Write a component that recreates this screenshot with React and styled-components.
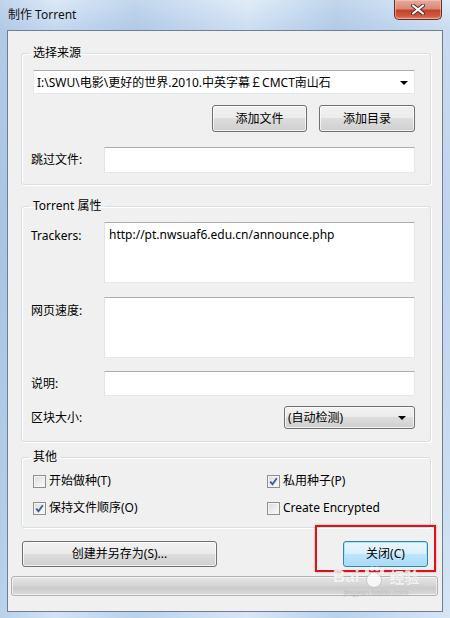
import React from "react";
import styled, { createGlobalStyle } from "styled-components";

const font = `"Noto Sans", "Noto Sans CJK SC", sans-serif`;

const GlobalStyle = createGlobalStyle`
  body {
    margin: 0;
    background: #ffffff;
  }
`;

const Window = styled.div`
  position: relative;
  width: 450px;
  height: 618px;
  display: flex;
  flex-direction: column;
  overflow: hidden;
  font-family: ${font};
  font-size: 12px;
  color: #000;
  background:
    linear-gradient(90deg, rgba(140, 175, 215, 0.35) 0%, rgba(255, 255, 255, 0) 12%, rgba(120, 160, 210, 0.25) 30%, rgba(255, 255, 255, 0.15) 55%, rgba(130, 170, 215, 0.3) 75%, rgba(255, 255, 255, 0.1) 100%),
    linear-gradient(180deg, #dce9f6 0%, #c2d7ee 5%, #b8d0ea 40%, #c5dbf0 80%, #d2e3f4 100%);
`;

const TitleBar = styled.div`
  height: 30px;
  display: flex;
  align-items: flex-start;
  padding-left: 8px;
  flex-shrink: 0;
`;

const Title = styled.div`
  line-height: 30px;
  font-size: 12px;
  color: #111;
`;

const CloseButton = styled.div`
  margin-left: auto;
  margin-right: 8px;
  width: 46px;
  height: 19px;
  border: 1px solid #6a2b24;
  border-top: none;
  border-radius: 0 0 5px 5px;
  background: linear-gradient(180deg, #e9a99b 0%, #d88a78 45%, #c2432c 55%, #cf5a40 85%, #e28a6e 100%);
  box-shadow: inset 0 0 0 1px rgba(255, 210, 200, 0.5);
  display: flex;
  align-items: center;
  justify-content: center;
`;

const Client = styled.div`
  flex: 1;
  margin: 0 7px 6px 7px;
  border: 1px solid #6f7f92;
  background: #f0f0f0;
  padding: 14px 11px 0 13px;
  display: flex;
  flex-direction: column;
`;

const Group = styled.fieldset`
  margin: ${(p) => p.$mt || 0}px 0 0 0;
  min-width: 0;
  width: 410px;
  box-sizing: border-box;
  border: 1px solid #d5dfe5;
  border-radius: 3px;
  box-shadow: inset 1px 1px 0 #ffffff, 1px 1px 0 #ffffff;
  padding: ${(p) => p.$pt}px 15px ${(p) => p.$pb}px 11px;
  display: flex;
  flex-direction: column;
`;

const Legend = styled.legend`
  padding: 0 4px;
  margin-left: -4px;
  line-height: 16px;
  height: 16px;
  font-size: 12px;
`;

const ComboEdit = styled.div`
  height: 24px;
  box-sizing: border-box;
  background: #fff;
  border: 1px solid #e3e9ef;
  border-top-color: #abadb3;
  display: flex;
  align-items: center;
  padding: 0 6px 0 3px;
  white-space: nowrap;
`;

const ComboText = styled.span`
  flex: 1;
  overflow: hidden;
`;

const Arrow = styled.span`
  width: 0;
  height: 0;
  border-left: 4px solid transparent;
  border-right: 4px solid transparent;
  border-top: 4px solid #000;
  margin-left: 6px;
  margin-top: 1px;
`;

const ButtonRow = styled.div`
  display: flex;
  justify-content: ${(p) => p.$justify || "flex-end"};
  gap: 12px;
  margin-top: ${(p) => p.$mt || 0}px;
  padding: ${(p) => p.$pad || "0"};
`;

const Button = styled.div`
  width: ${(p) => p.$w}px;
  height: ${(p) => p.$h || 27}px;
  box-sizing: border-box;
  border: 1px solid ${(p) => (p.$default ? "#3c7fb1" : "#707070")};
  border-radius: 3px;
  background: ${(p) =>
    p.$default
      ? "linear-gradient(180deg, #eaf6fd 0%, #d9f0fc 48%, #bee6fd 50%, #a7d9f5 100%)"
      : "linear-gradient(180deg, #f2f2f2 0%, #ebebeb 48%, #dddddd 50%, #cfcfcf 100%)"};
  box-shadow: inset 0 0 0 1px ${(p) => (p.$default ? "rgba(160, 230, 250, 0.9)" : "rgba(255, 255, 255, 0.7)")};
  display: flex;
  align-items: center;
  justify-content: center;
  line-height: 16px;
`;

const FieldRow = styled.div`
  display: flex;
  align-items: ${(p) => (p.$top ? "flex-start" : "center")};
  margin-top: ${(p) => p.$mt || 0}px;
`;

const Label = styled.div`
  width: 71px;
  flex-shrink: 0;
  margin-left: -2px;
  line-height: 16px;
  padding-top: ${(p) => (p.$top ? 6 : 0)}px;
`;

const Input = styled.div`
  flex: 1;
  margin-left: 2px;
  height: ${(p) => p.$h}px;
  box-sizing: border-box;
  background: #fff;
  border: 1px solid #e3e9ef;
  border-top-color: #abadb3;
  border-left-color: #e2e3ea;
  padding: 4px 4px;
  line-height: 16px;
`;

const Spacer = styled.div`
  flex: 1;
`;

const DropButton = styled.div`
  width: 131px;
  height: 23px;
  box-sizing: border-box;
  border: 1px solid #707070;
  border-radius: 3px;
  background: linear-gradient(180deg, #f2f2f2 0%, #ebebeb 48%, #dddddd 50%, #cfcfcf 100%);
  box-shadow: inset 0 0 0 1px rgba(255, 255, 255, 0.7);
  display: flex;
  align-items: center;
  padding: 0 8px 0 3px;
  line-height: 16px;
`;

const CheckGrid = styled.div`
  display: grid;
  grid-template-columns: 234px 1fr;
  row-gap: 11px;
`;

const CheckItem = styled.div`
  display: flex;
  align-items: center;
  height: 16px;
  gap: 3px;
  line-height: 16px;
`;

const Box = styled.span`
  width: 13px;
  height: 13px;
  box-sizing: border-box;
  border: 1px solid #8e8f8f;
  background: linear-gradient(135deg, #dcdcdc 0%, #f2f2f2 70%, #fbfbfb 100%);
  box-shadow: inset 0 0 0 1px #f4f4f4;
  display: flex;
  align-items: center;
  justify-content: center;
  flex-shrink: 0;
`;

const Progress = styled.div`
  height: 20px;
  box-sizing: border-box;
  margin: 9px -7px 0 -10px;
  border: 1px solid #b2b2b2;
  border-radius: 3px;
  background: linear-gradient(180deg, #e6e6e6 0%, #d8d8d8 40%, #cbcbcb 60%, #dadada 100%);
  box-shadow: inset 0 0 0 1px rgba(255, 255, 255, 0.6);
`;

const Highlight = styled.div`
  position: absolute;
  left: 315px;
  top: 525px;
  width: 121px;
  height: 47px;
  box-sizing: border-box;
  border: 2px solid #d9131c;
  box-shadow: 0 0 2px rgba(160, 0, 0, 0.4);
`;

const Watermark = styled.div`
  position: absolute;
  left: 333px;
  top: 566px;
  display: flex;
  flex-direction: column;
  align-items: center;
  color: rgba(255, 255, 255, 0.8);
  text-shadow: 0 0 1px rgba(170, 170, 170, 0.5);
  pointer-events: none;
`;

const MarkTop = styled.div`
  display: flex;
  align-items: center;
  font-family: "Liberation Sans", sans-serif;
  font-weight: bold;
  font-size: 17px;
  line-height: 18px;
  gap: 2px;
`;

const MarkCjk = styled.span`
  font-family: "Noto Sans CJK SC", sans-serif;
  font-size: 15px;
`;

const MarkSmall = styled.div`
  font-family: "Liberation Sans", sans-serif;
  font-size: 8px;
  line-height: 10px;
  color: rgba(200, 200, 200, 0.5);
`;

function Check({ checked }) {
  return (
    <Box>
      {checked && (
        <svg width="9" height="9" viewBox="0 0 9 9">
          <path d="M1.2 4.6 L3.5 7.2 L7.8 1.2" fill="none" stroke="#3d5a9a" strokeWidth="1.8" />
        </svg>
      )}
    </Box>
  );
}

export default function App() {
  return (
    <>
      <GlobalStyle />
      <Window>
        <TitleBar>
          <Title>制作 Torrent</Title>
          <CloseButton>
            <svg width="14" height="11" viewBox="0 0 14 11">
              <path d="M2 1.5 L12 9.5 M12 1.5 L2 9.5" stroke="#5a2a24" strokeWidth="4" strokeLinecap="round" />
              <path d="M2 1.5 L12 9.5 M12 1.5 L2 9.5" stroke="#ffffff" strokeWidth="2.2" strokeLinecap="round" />
            </svg>
          </CloseButton>
        </TitleBar>
        <Client>
          <Group $pt={9} $pb={11}>
            <Legend>选择来源</Legend>
            <ComboEdit>
              <ComboText>I:\SWU\电影\更好的世界.2010.中英字幕￡CMCT南山石</ComboText>
              <Arrow />
            </ComboEdit>
            <ButtonRow $mt={11}>
              <Button $w={95}>添加文件</Button>
              <Button $w={96}>添加目录</Button>
            </ButtonRow>
            <FieldRow $mt={15}>
              <Label>跳过文件:</Label>
              <Input $h={26} />
            </FieldRow>
          </Group>

          <Group $mt={13} $pt={8} $pb={12}>
            <Legend>Torrent 属性</Legend>
            <FieldRow $top>
              <Label $top>Trackers:</Label>
              <Input $h={61}>http://pt.nwsuaf6.edu.cn/announce.php</Input>
            </FieldRow>
            <FieldRow $top $mt={14}>
              <Label $top>网页速度:</Label>
              <Input $h={61} />
            </FieldRow>
            <FieldRow $mt={13}>
              <Label>说明:</Label>
              <Input $h={25} />
            </FieldRow>
            <FieldRow $mt={10}>
              <Label>区块大小:</Label>
              <Spacer />
              <DropButton>
                <ComboText>(自动检测)</ComboText>
                <Arrow />
              </DropButton>
            </FieldRow>
          </Group>

          <Group $mt={7} $pt={8} $pb={11}>
            <Legend>其他</Legend>
            <CheckGrid>
              <CheckItem>
                <Check />
                开始做种(T)
              </CheckItem>
              <CheckItem>
                <Check checked />
                私用种子(P)
              </CheckItem>
              <CheckItem>
                <Check checked />
                保持文件顺序(O)
              </CheckItem>
              <CheckItem>
                <Check />
                Create Encrypted
              </CheckItem>
            </CheckGrid>
          </Group>

          <ButtonRow $mt={13} $justify="space-between" $pad="0 3px 0 1px">
            <Button $w={195} $h={26}>创建并另存为(S)...</Button>
            <Button $w={85} $h={26} $default>关闭(C)</Button>
          </ButtonRow>
          <Progress />
        </Client>
        <Highlight />
        <Watermark>
          <MarkTop>
            Bai
            <svg width="26" height="22" viewBox="0 0 26 22">
              <circle cx="13" cy="14" r="7.5" fill="rgba(255,255,255,0.75)" stroke="rgba(170,170,170,0.5)" />
              <circle cx="6" cy="5" r="2.2" fill="rgba(255,255,255,0.75)" />
              <circle cx="11" cy="2.8" r="2.2" fill="rgba(255,255,255,0.75)" />
              <circle cx="16" cy="2.8" r="2.2" fill="rgba(255,255,255,0.75)" />
              <circle cx="21" cy="5" r="2.2" fill="rgba(255,255,255,0.75)" />
            </svg>
            <MarkCjk>经验</MarkCjk>
          </MarkTop>
          <MarkSmall>jingyan.baidu.com</MarkSmall>
        </Watermark>
      </Window>
    </>
  );
}
